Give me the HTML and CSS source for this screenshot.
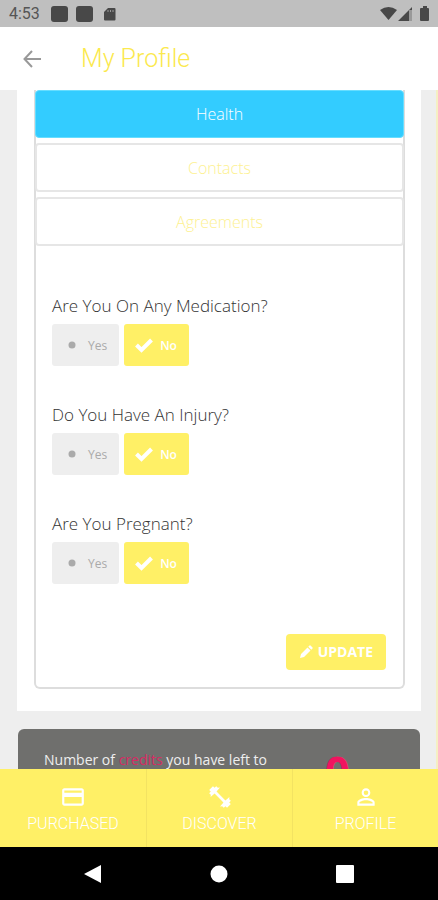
FILE: index.html
```html
<!DOCTYPE html>
<html lang="en">
<head>
<meta charset="utf-8">
<meta name="viewport" content="width=device-width, initial-scale=1">
<title>My Profile</title>
<link rel="stylesheet" href="styles.css">
</head>
<body>
<div class="status">
  <span class="clock">4:53</span>
  <svg class="status-left" width="66" height="16" viewBox="0 0 66 16"><rect x="0" y="0" width="17" height="16" rx="3"/><rect x="25" y="0" width="17" height="16" rx="3"/><path d="M57 2h6.500q1 0 1 1v10.500q0 1-1 1H54q-1 0-1-1V6z"/><path class="cut" d="M57 4v2M59.500 4v2M62 4v2"/></svg>
  <svg class="status-right" width="50" height="16" viewBox="0 0 50 16"><path d="M0 4Q8.500-2 17 4L8.500 14z"/><path d="M18 15L32 1v3h-3v11z"/><path class="dim" d="M29 4h3v11h-3z"/><path d="M40 3q0-1 1-1h2V0h4v2h1q1 0 1 1v11q0 1-1 1h-7q-1 0-1-1z"/></svg>
</div>
<header class="appbar">
  <button class="back" type="button" aria-label="Back"><svg width="18" height="18" viewBox="0 0 18 18"><path d="M18 9H2M9 1L1.500 9 9 17"/></svg></button>
  <h1>My Profile</h1>
</header>
<main class="content">
  <section class="panel">
    <form class="card">
      <div class="tabs">
        <button class="tab active" type="button">Health</button>
        <button class="tab" type="button">Contacts</button>
        <button class="tab" type="button">Agreements</button>
      </div>
      <div class="questions">
        <fieldset>
          <legend>Are You On Any Medication?</legend>
          <div class="options">
            <label class="option"><input type="radio" name="medication"><svg class="mark" width="18" height="18" viewBox="0 0 18 18"><circle class="dot" cx="9" cy="9" r="3.500"/><path class="check" d="M1.500 9L6.500 14 16.500 4"/></svg>Yes</label>
            <label class="option"><input type="radio" name="medication" checked><svg class="mark" width="18" height="18" viewBox="0 0 18 18"><circle class="dot" cx="9" cy="9" r="3.500"/><path class="check" d="M1.500 9L6.500 14 16.500 4"/></svg>No</label>
          </div>
        </fieldset>
        <fieldset>
          <legend>Do You Have An Injury?</legend>
          <div class="options">
            <label class="option"><input type="radio" name="injury"><svg class="mark" width="18" height="18" viewBox="0 0 18 18"><circle class="dot" cx="9" cy="9" r="3.500"/><path class="check" d="M1.500 9L6.500 14 16.500 4"/></svg>Yes</label>
            <label class="option"><input type="radio" name="injury" checked><svg class="mark" width="18" height="18" viewBox="0 0 18 18"><circle class="dot" cx="9" cy="9" r="3.500"/><path class="check" d="M1.500 9L6.500 14 16.500 4"/></svg>No</label>
          </div>
        </fieldset>
        <fieldset>
          <legend>Are You Pregnant?</legend>
          <div class="options">
            <label class="option"><input type="radio" name="pregnant"><svg class="mark" width="18" height="18" viewBox="0 0 18 18"><circle class="dot" cx="9" cy="9" r="3.500"/><path class="check" d="M1.500 9L6.500 14 16.500 4"/></svg>Yes</label>
            <label class="option"><input type="radio" name="pregnant" checked><svg class="mark" width="18" height="18" viewBox="0 0 18 18"><circle class="dot" cx="9" cy="9" r="3.500"/><path class="check" d="M1.500 9L6.500 14 16.500 4"/></svg>No</label>
          </div>
        </fieldset>
      </div>
      <div class="actions">
        <button class="update" type="button"><svg width="14" height="14" viewBox="0 0 14 14"><path d="M1 13l1-4 6.500-6.500 3 3L5 12zM9.300 1.700L10.500.5q.5-.5 1 0l2 2q.5.500 0 1l-1.200 1.200z"/></svg>UPDATE</button>
      </div>
    </form>
  </section>
  <section class="credits">
    <p>Number of <a href="#credits">credits</a> you have left to</p>
    <strong>0</strong>
  </section>
</main>
<nav class="tabbar">
  <a href="#purchased"><svg width="26" height="26" viewBox="0 0 24 24"><path d="M20 4H4c-1.110 0-1.990.89-1.990 2L2 18c0 1.110.89 2 2 2h16c1.110 0 2-.89 2-2V6c0-1.110-.89-2-2-2zm0 14H4v-6h16v6zm0-10H4V6h16v2z"/></svg>PURCHASED</a>
  <a href="#discover"><svg width="26" height="26" viewBox="0 0 24 24"><path d="M2 5.500L5.500 2 7 3.500 8.500 2 10 3.500 12 3.300 8.800 7l8.200 8.200 3.700-3.200-.2 2 1.500 1.500-1.500 1.500 1.500 1.500-3.500 3.500-1.500-1.500-1.500 1.500-1.500-1.500-2 .2 3.200-3.700L7 8.800 3.300 12l.2-2L2 8.500 3.500 7z"/></svg>DISCOVER</a>
  <a href="#profile"><svg width="26" height="26" viewBox="0 0 24 24"><path d="M12 5.900a2.100 2.100 0 1 1 0 4.200 2.100 2.100 0 0 1 0-4.200m0 9c2.970 0 6.100 1.460 6.100 2.100v1.100H5.900V17c0-.64 3.130-2.100 6.100-2.100M12 4C9.790 4 8 5.790 8 8s1.790 4 4 4 4-1.790 4-4-1.790-4-4-4zm0 9c-2.670 0-8 1.340-8 4v3h16v-3c0-2.660-5.330-4-8-4z"/></svg>PROFILE</a>
</nav>
<div class="system">
  <button type="button" aria-label="Back"><svg width="18" height="20" viewBox="0 0 18 20"><path d="M0 10L17 1v18z"/></svg></button>
  <button type="button" aria-label="Home"><svg width="18" height="18" viewBox="0 0 18 18"><circle cx="9" cy="9" r="8.500"/></svg></button>
  <button type="button" aria-label="Recents"><svg width="18" height="18" viewBox="0 0 18 18"><rect width="18" height="18" rx="1"/></svg></button>
</div>
</body>
</html>
```
FILE: styles.css
```css
* { box-sizing: border-box; }
body {
  margin: 0;
  height: 100vh;
  display: flex;
  flex-direction: column;
  font-family: "Open Sans", sans-serif;
  font-weight: 300;
  font-size: 16px;
  background: #fff;
}
button { font: inherit; margin: 0; padding: 0; border: 0; background: none; cursor: pointer; }
svg { display: block; flex: none; }

.status {
  display: flex;
  align-items: center;
  flex: none;
  height: 27px;
  padding: 0 8px 0 9px;
  background: #bfbfbf;
  color: #555;
  font: 400 16px/28px Roboto, sans-serif;
}
.status svg { fill: #484848; }
.status-left { margin-left: 11px; }
.status-right { margin-left: auto; }
.status .cut { stroke: #999; }
.status .dim { fill: #999; }

.appbar {
  display: flex;
  align-items: center;
  flex: none;
  height: 63px;
  padding: 0 23px;
  gap: 40px;
}
.back svg { fill: none; stroke: #999; stroke-width: 2; }
.appbar h1 {
  margin: 0;
  font: 300 25px/32px Roboto, sans-serif;
  color: #fbe94e;
}

.content {
  flex: 1;
  min-height: 0;
  overflow: hidden;
  padding: 0 15px 0 17px;
  background: #eee;
  border-right: 2px solid #f5efc3;
}
.panel { background: #fff; padding: 0 16px 22px 17px; }
.card {
  border: 2px solid #ddd;
  border-top: 0;
  border-radius: 0 0 6px 6px;
}
.tabs { display: flex; flex-direction: column; gap: 5px; margin: 0 -1px; }
.tab {
  height: 49px;
  border: 2px solid #e6e6e6;
  border-radius: 4px;
  background: #fff;
  color: #fdf192;
}
.tab.active { height: 48px; background: #3cf; border-color: #6df; border-width: 1px; color: #fff; }

.questions { padding: 48px 16px 0; }
fieldset { min-width: 0; margin: 0 0 37px; padding: 0; border: 0; }
legend { padding: 0; font-size: 17px; line-height: 24px; color: #333; }
.options { display: flex; gap: 5px; padding-top: 6px; }
.option {
  display: flex;
  align-items: center;
  gap: 7px;
  height: 42px;
  padding: 0 12px 0 11px;
  border-radius: 3px;
  background: #eee;
  color: #aaa;
  font-size: 12px;
  font-weight: 400;
}
.option input { appearance: none; position: absolute; margin: 0; opacity: 0; }
.dot { fill: #aaa; }
.check { display: none; fill: none; stroke: #fff; stroke-width: 4; }
.option:has(:checked) { background: #fff066; color: #fff; font-weight: 600; }
.option:has(:checked) .dot { display: none; }
.option:has(:checked) .check { display: block; }

.actions { display: flex; justify-content: flex-end; padding: 13px 17px 17px; }
.update {
  display: flex;
  align-items: center;
  gap: 5px;
  height: 36px;
  padding: 0 13px;
  border-radius: 4px;
  background: #fff066;
  color: #fff;
  font-size: 14px;
  line-height: 20px;
  font-weight: 700;
}
.update svg { fill: #fff; }

.credits {
  display: flex;
  align-items: flex-start;
  justify-content: space-between;
  margin: 18px 1px 0;
  padding: 20px 70px 24px 26px;
  border-radius: 6px;
  background: #6f6f6d;
  color: #eee;
}
.credits p { margin: 0; font-size: 14px; line-height: 22px; font-weight: 400; }
.credits a { color: #d82a63; text-decoration: none; }
.credits strong { font-size: 44px; line-height: 46px; font-weight: 700; color: #f0145f; }

.tabbar {
  display: grid;
  grid-template-columns: repeat(3, 1fr);
  flex: none;
  height: 78px;
  background: #fff066;
}
.tabbar a {
  display: flex;
  flex-direction: column;
  align-items: center;
  padding-top: 15px;
  gap: 4px;
  color: #fff;
  text-decoration: none;
  font: 300 16px/20px Roboto, sans-serif;
}
.tabbar a + a { border-left: 1px solid #f3e362; }
.tabbar svg { fill: #fff; }

.system {
  display: flex;
  align-items: center;
  justify-content: space-between;
  flex: none;
  height: 53px;
  padding: 0 84px;
  background: #000;
}
.system svg { fill: #fff; }
```
